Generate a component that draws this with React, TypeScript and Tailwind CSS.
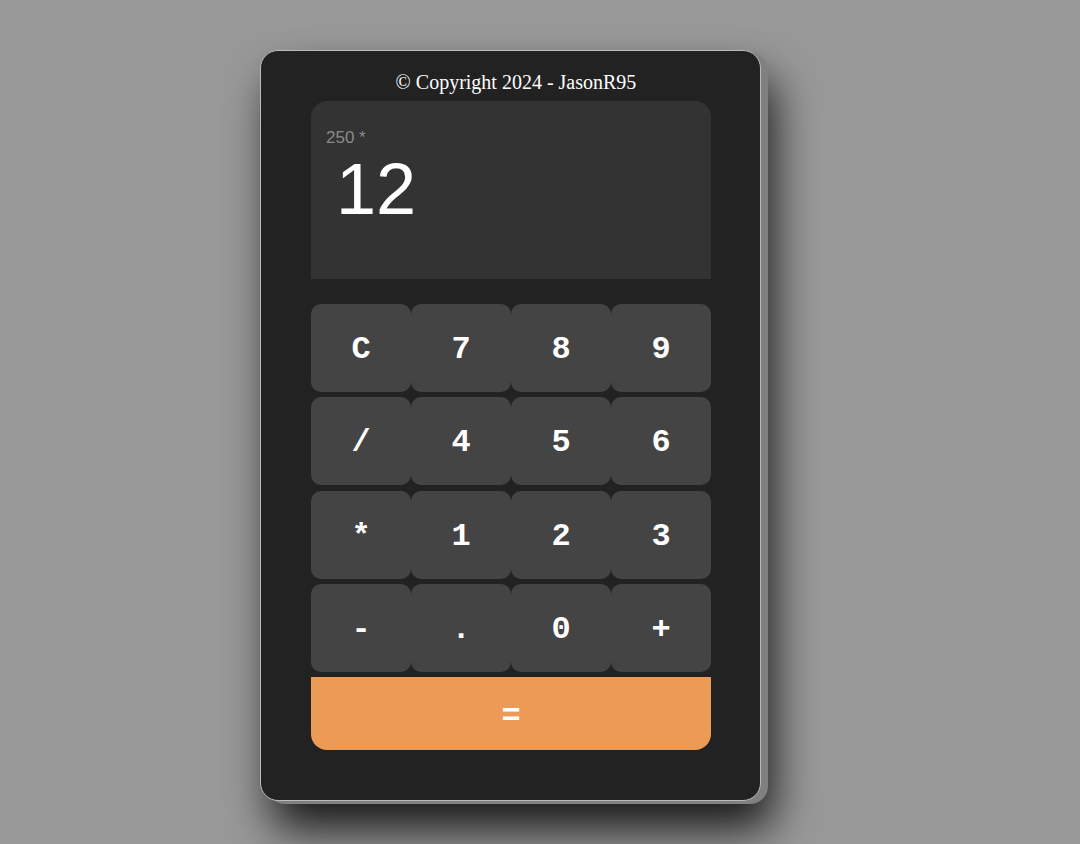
import { useState } from 'react';

const KEYS = ['C', '7', '8', '9', '/', '4', '5', '6', '*', '1', '2', '3', '-', '.', '0', '+'];

export default function App() {
  const [previous] = useState('250 *');
  const [current] = useState('12');

  return (
    <div className="min-h-screen bg-[#999999] pt-[50px] pl-[260px]">
      <div className="flex h-[751px] w-[501px] flex-col rounded-[18px] border border-[#bbbbbb] bg-[#222222] pl-[50px] pr-[49px] shadow-[7px_3px_0_#808080,12px_28px_45px_rgba(0,0,0,0.85)]">
        <p className="pt-[20px] pl-[10px] text-center text-[20px] leading-[23px] text-white [font-family:'Liberation_Serif',serif]">
          © Copyright 2024 - JasonR95
        </p>

        {/* display */}
        <div className="mt-[7px] flex h-[178px] flex-col rounded-t-2xl bg-[#333333] pt-[28px] pl-[15px] [font-family:'Liberation_Sans',Arial,sans-serif]">
          <div className="text-[17px] leading-[18px] text-[#8a8a8a]">{previous}</div>
          <div className="pl-[10px] text-[72px] leading-[84px] text-white">{current}</div>
        </div>

        {/* keypad */}
        <div className="mt-[25px] grid grid-cols-4 gap-y-[5.33px] [font-family:'Liberation_Mono','Courier_New',monospace]">
          {KEYS.map((k) => (
            <button
              key={k}
              className="flex h-[88px] items-center justify-center rounded-[10px] bg-[#444444] pt-[4px] text-[32px] font-bold text-white"
            >
              {k}
            </button>
          ))}
          <button className="col-span-4 flex h-[73px] items-center justify-center rounded-b-2xl bg-[#eb9b56] pt-[6px] text-[32px] font-bold text-white">
            =
          </button>
        </div>
      </div>
    </div>
  );
}
